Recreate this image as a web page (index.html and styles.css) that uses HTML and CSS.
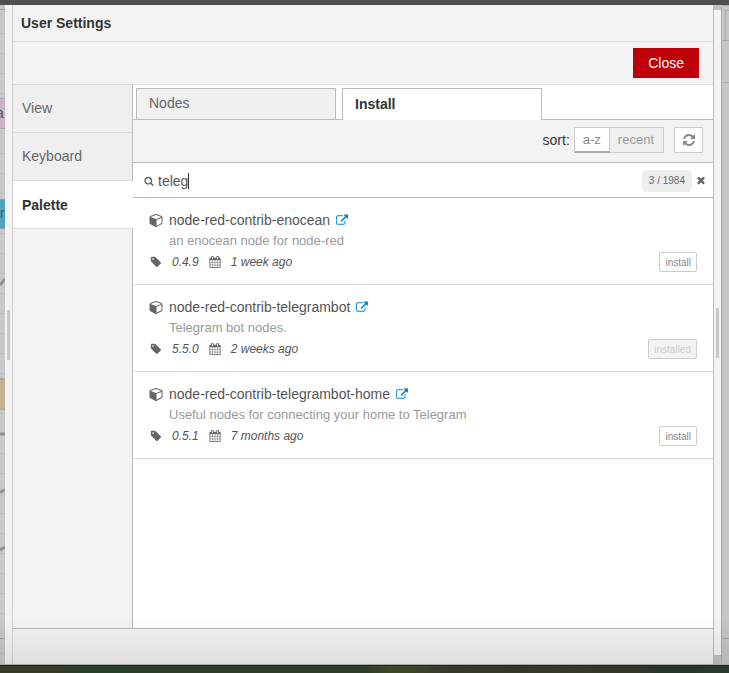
FILE: index.html
```html
<!DOCTYPE html>
<html lang="en">
<head>
<meta charset="utf-8">
<title>User Settings</title>
<link rel="stylesheet" href="styles.css">
</head>
<body>
<svg class="symbols" aria-hidden="true">
  <symbol id="search" viewBox="0 0 1792 1792"><path d="M1216 832q0-185-131.500-316.500t-316.500-131.500-316.500 131.500-131.500 316.500 131.500 316.500 316.500 131.500 316.500-131.500 131.500-316.500zm512 832q0 52-38 90t-90 38q-54 0-90-38l-343-342q-179 124-399 124-143 0-273.500-55.500t-225-150-150-225-55.500-273.500 55.500-273.500 150-225 225-150 273.500-55.500 273.500 55.500 225 150 150 225 55.500 273.500q0 220-124 399l343 343q37 37 37 90z"/></symbol>
  <symbol id="cube" viewBox="0 0 1664 1792"><path d="M896 1629l640-349v-636l-640 233v752zm-64-865l698-254-698-254-698 254zm832-252v768q0 35-18 65t-49 47l-704 384q-28 16-61 16t-61-16l-704-384q-31-17-49-47t-18-65v-768q0-40 23-73t61-47l704-256q22-8 44-8t44 8l704 256q38 14 61 47t23 73z"/></symbol>
  <symbol id="external" viewBox="0 0 1792 1792"><path d="M1408 992v320q0 119-84.500 203.500t-203.500 84.500h-832q-119 0-203.500-84.500t-84.500-203.500v-832q0-119 84.500-203.500t203.500-84.500h704q14 0 23 9t9 23v64q0 14-9 23t-23 9h-704q-66 0-113 47t-47 113v832q0 66 47 113t113 47h832q66 0 113-47t47-113v-320q0-14 9-23t23-9h64q14 0 23 9t9 23zm384-864v512q0 26-19 45t-45 19-45-19l-176-176-652 652q-10 10-23 10t-23-10l-114-114q-10-10-10-23t10-23l652-652-176-176q-19-19-19-45t19-45 45-19h512q26 0 45 19t19 45z"/></symbol>
  <symbol id="tag" viewBox="0 0 1792 1792"><path d="M576 448q0-53-37.500-90.500t-90.500-37.500-90.500 37.500-37.500 90.500 37.500 90.500 90.500 37.500 90.500-37.500 37.500-90.500zm1067 576q0 53-37 90l-491 492q-39 37-91 37-53 0-90-37l-715-716q-38-37-64.500-101t-26.500-117v-416q0-52 38-90t90-38h416q53 0 117 26.500t102 64.500l715 714q37 39 37 91z"/></symbol>
  <symbol id="calendar" viewBox="64 0 1664 1792"><path d="M192 1664h288v-288h-288v288zm352 0h320v-288h-320v288zm-352-352h288v-320h-288v320zm352 0h320v-320h-320v320zm-352-384h288v-288h-288v288zm736 736h320v-288h-320v288zm-384-736h320v-288h-320v288zm768 736h288v-288h-288v288zm-384-352h320v-320h-320v320zm-352-864v-288q0-13-9.500-22.500t-22.500-9.500h-64q-13 0-22.500 9.500t-9.500 22.500v288q0 13 9.500 22.500t22.500 9.500h64q13 0 22.500-9.500t9.500-22.500zm736 864h288v-320h-288v320zm-384-384h320v-288h-320v288zm384 0h288v-288h-288v288zm32-480v-288q0-13-9.500-22.500t-22.500-9.500h-64q-13 0-22.500 9.500t-9.500 22.500v288q0 13 9.500 22.500t22.500 9.500h64q13 0 22.500-9.500t9.500-22.500zm384-64v1280q0 52-38 90t-90 38h-1408q-52 0-90-38t-38-90v-1280q0-52 38-90t90-38h128v-96q0-66 47-113t113-47h64q66 0 113 47t47 113v96h384v-96q0-66 47-113t113-47h64q66 0 113 47t47 113v96h128q52 0 90 38t38 90z"/></symbol>
  <symbol id="refresh" viewBox="128 128 1536 1536"><path d="M1639 1056q0 5-1 7-64 268-268 434.500t-478 166.500q-146 0-282.500-55t-243.500-157l-129 129q-19 19-45 19t-45-19-19-45v-448q0-26 19-45t45-19h448q26 0 45 19t19 45-19 45l-137 137q71 66 161 102t187 36q134 0 250-65t186-179q11-17 53-117 8-23 30-23h192q13 0 22.500 9.500t9.500 22.500zm25-800v448q0 26-19 45t-45 19h-448q-26 0-45-19t-19-45 19-45l138-138q-148-137-349-137-134 0-250 65t-186 179q-11 17-53 117-8 23-30 23h-199q-13 0-22.500-9.500t-9.500-22.500v-7q65-268 270-434.500t480-166.500q146 0 284 55.500t245 156.500l130-129q19-19 45-19t45 19 19 45z"/></symbol>
  <symbol id="times" viewBox="300 400 1192 1260"><path d="M1490 1322q0 40-28 68l-136 136q-28 28-68 28t-68-28l-294-294-294 294q-28 28-68 28t-68-28l-136-136q-28-28-28-68t28-68l294-294-294-294q-28-28-28-68t28-68l136-136q28-28 68-28t68 28l294 294 294-294q28-28 68-28t68 28l136 136q28 28 28 68t-28 68l-294 294 294 294q28 28 28 68z"/></symbol>
</svg>
<div class="app">
  <div class="workspace" aria-hidden="true">
    <svg class="canvas" viewBox="0 0 5 659" preserveAspectRatio="xMinYMin slice">
      <defs><pattern id="grid" width="5" height="20" patternUnits="userSpaceOnUse" y="8"><path d="M0 .5h5" stroke="#bebebe"/></pattern></defs>
      <rect width="5" height="659" fill="#c8c8c8"/>
      <rect width="5" height="659" fill="url(#grid)"/>
      <path d="M0 4.500h5M0 633.500h5" stroke="#a5a5a5"/>
      <rect x="-5" y="93.500" width="12" height="30" fill="#c8b4c4" stroke="#aaa"/>
      <rect x="-5" y="194.500" width="12" height="29" fill="#4fa3be" stroke="#999"/>
      <text class="node-label" x="-4" y="113">a</text>
      <text class="node-label" x="0" y="213">r</text>
      <rect x="-5" y="374" width="12" height="30" fill="#cbb193" stroke="#aaa" stroke-width="2"/>
      <path d="M0 280l5-6M0 429h5M0 487l5-2M0 545l5-3" stroke="#929292" stroke-width="3"/>
    </svg>
  </div>
  <div class="separator left" role="separator" aria-orientation="vertical"><span class="grip"></span></div>
  <main class="tray">
    <h1 class="tray-title">User Settings</h1>
    <div class="tray-actions"><button class="close" type="button">Close</button></div>
    <div class="tray-body">
      <nav class="sections">
        <a href="#view">View</a>
        <a href="#keyboard">Keyboard</a>
        <a class="active" href="#palette" aria-current="page">Palette</a>
      </nav>
      <section class="palette">
        <div class="tabs">
          <a href="#nodes">Nodes</a>
          <a class="active" href="#install" aria-current="page">Install</a>
        </div>
        <div class="sort">
          <span class="sort-label">sort:</span>
          <div class="sort-group">
            <button class="selected" type="button" aria-pressed="true">a-z</button><button type="button" aria-pressed="false">recent</button>
          </div>
          <button class="refresh" type="button" aria-label="Refresh"><svg class="icon i12"><use href="#refresh"/></svg></button>
        </div>
        <div class="search">
          <label for="query" aria-label="Search modules"><svg class="icon i10"><use href="#search"/></svg></label>
          <input id="query" type="text" value="teleg"><span class="caret"></span>
          <span class="count">3 / 1984</span>
          <button class="clear" type="button" aria-label="Clear search"><svg class="icon i8"><use href="#times"/></svg></button>
        </div>
        <ul class="modules">
          <li>
            <div class="name"><svg class="icon i14"><use href="#cube"/></svg><span>node-red-contrib-enocean</span><a href="#enocean" aria-label="Open module page"><svg class="icon i12"><use href="#external"/></svg></a></div>
            <p>an enocean node for node-red</p>
            <div class="meta"><svg class="icon i12"><use href="#tag"/></svg><span class="version">0.4.9</span><svg class="icon i12"><use href="#calendar"/></svg><span>1 week ago</span><button type="button">install</button></div>
          </li>
          <li>
            <div class="name"><svg class="icon i14"><use href="#cube"/></svg><span>node-red-contrib-telegrambot</span><a href="#telegrambot" aria-label="Open module page"><svg class="icon i12"><use href="#external"/></svg></a></div>
            <p>Telegram bot nodes.</p>
            <div class="meta"><svg class="icon i12"><use href="#tag"/></svg><span class="version">5.5.0</span><svg class="icon i12"><use href="#calendar"/></svg><span>2 weeks ago</span><button type="button" disabled>installed</button></div>
          </li>
          <li>
            <div class="name"><svg class="icon i14"><use href="#cube"/></svg><span>node-red-contrib-telegrambot-home</span><a href="#telegrambot-home" aria-label="Open module page"><svg class="icon i12"><use href="#external"/></svg></a></div>
            <p>Useful nodes for connecting your home to Telegram</p>
            <div class="meta"><svg class="icon i12"><use href="#tag"/></svg><span class="version">0.5.1</span><svg class="icon i12"><use href="#calendar"/></svg><span>7 months ago</span><button type="button">install</button></div>
          </li>
        </ul>
      </section>
    </div>
    <footer class="tray-footer"></footer>
  </main>
  <div class="separator right" role="separator" aria-orientation="vertical"><span class="grip"></span></div>
  <div class="sidebar" aria-hidden="true"><div class="sidebar-tabs"><span></span></div><div class="sidebar-tools"></div><div class="sidebar-body"></div><div class="sidebar-footer"></div></div>
  <div class="shade"></div>
</div>
</body>
</html>
```
FILE: styles.css
```css
*, *::after { box-sizing: border-box; }
body {
  margin: 0;
  height: 100vh;
  display: flex;
  flex-direction: column;
  font: 14px/20px "Liberation Sans", Arial, sans-serif;
  color: #333;
  border-top: 5px solid #4f4f4f;
  background: #2a4029;
}
body::after {
  content: "";
  height: 8px;
  flex: none;
  border-top: 1px solid #1c241c;
  background: linear-gradient(90deg, #3a3b26, #3a3b26 7%, #26402a 12%, #2d3d29 22%, #2d3d29 50%, #3f4a26 54%, #34392a 62%, #373727 85%, #25352a 92%, #2a3c2b);
}
button, input { font: inherit; color: inherit; margin: 0; border-radius: 0; }
a { color: inherit; text-decoration: none; }
.symbols { position: absolute; width: 0; height: 0; }
.icon { display: block; flex: none; fill: currentColor; }
.i14 { width: 14px; height: 14px; }
.i12 { width: 12px; height: 12px; }
.i10 { width: 10px; height: 10px; }
.i8 { width: 8px; height: 8px; }

.app { position: relative; flex: 1; min-height: 0; display: flex; border-bottom: 1px solid #aaa; }
.workspace { width: 5px; overflow: hidden; background: #c8c8c8; }
.canvas { display: block; width: 5px; height: 659px; }
.node-label { font-size: 14px; fill: #555; }
.separator { width: 8px; display: flex; align-items: center; justify-content: center; background: #f3f3f3; }
.separator.left { border-right: 1px solid #d0d0d0; }
.separator.right { border-right: 1px solid #a8a8a8; border-top: 5px solid #c2c2c2; border-bottom: 9px solid #c2c2c2; }
.grip { width: 3px; height: 50px; background: #c8c8c8; }

.sidebar { width: 7px; display: flex; flex-direction: column; background: #c6c6c6; }
.sidebar-tabs { height: 36px; padding: 4px 0 0 3px; border-top: 1px solid #aaa; border-bottom: 1px solid #aaa; }
.sidebar-tabs span { display: block; height: 100%; border: 1px solid #aaa; border-width: 1px 0 0 1px; }
.sidebar-tools { height: 42px; border-bottom: 1px solid #b0b0b0; }
.sidebar-body { flex: 1; }
.sidebar-footer { height: 26px; border-top: 1px solid #aaa; }

.tray { flex: 1; min-width: 0; display: flex; flex-direction: column; background: #f3f3f3; border-right: 1px solid #bbb; }
.tray-title { margin: 0; padding: 8px; font-size: 14px; line-height: 20px; border-bottom: 1px solid #ddd; }
.tray-actions { display: flex; justify-content: flex-end; padding: 6px 14px; border-bottom: 1px solid #ddd; }
.close { height: 30px; padding: 0 15px; border: 0; background: #bd0009; color: #fff; }
.tray-body { flex: 1; min-height: 0; display: flex; border-bottom: 1px solid #bbb; }
.tray-footer { height: 35px; }

.sections { width: 120px; border-right: 1px solid #bbb; color: #666; }
.sections a { display: block; padding: 13px 9px 14px; margin: 0; border-bottom: 1px solid #ddd; background: #efefef; }
.sections .active { margin-right: -1px; background: #fff; color: #333; font-weight: bold; padding: 14px 9px 13px; }

.palette { flex: 1; min-width: 0; background: #fff; }
.tabs { display: flex; gap: 6px; height: 35px; padding: 3px 3px 0; border-bottom: 1px solid #bbb; }
.tabs a { width: 200px; padding: 4px 12px; border: 1px solid #bbb; border-bottom: 0; background: #f0f0f0; color: #666; }
.tabs .active { margin-bottom: -1px; padding-top: 5px; background: #fff; color: #333; font-weight: bold; }

.sort { display: flex; justify-content: flex-end; align-items: center; height: 43px; padding: 0 10px 2px; border-bottom: 1px solid #bbb; background: #f3f3f3; }
.sort-group { display: flex; margin: 0 10px 0 4px; border: 1px solid #ccc; }
.sort-group button { height: 24px; padding: 0 9px 0 8px; border: 0; background: #efefef; color: #999; font-size: 13px; }
.sort-group .selected { margin-bottom: -1px; padding: 0 8px; height: 25px; border-right: 1px solid #ccc; border-bottom: 2px solid #aaa; background: #fff; color: #888; }
.refresh { display: flex; align-items: center; justify-content: center; width: 29px; height: 26px; padding: 0; border: 1px solid #ccc; background: #fff; color: #888; }

.search { display: flex; align-items: center; height: 35px; padding: 2px 8px 0 11px; border-bottom: 1px solid #bbb; }
.search label { margin-right: 4px; color: #666; }
.search input { field-sizing: content; padding: 0; border: 0; outline: 0; background: none; color: #555; }
.caret { width: 1px; height: 16px; background: #333; }
.count { margin-left: auto; padding: 0 7px; border-radius: 4px; background: #eee; color: #666; font-size: 10px; line-height: 22px; }
.clear { margin-left: 5px; padding: 0; border: 0; background: none; color: #666; }

.modules { list-style: none; margin: 0; padding: 0; }
.modules li { padding: 12px 16px 11px; border-bottom: 1px solid #ddd; }
.name { display: flex; align-items: center; gap: 6px; margin-bottom: 1px; color: #555; }
.name .icon { color: #666; }
.name a .icon { color: #0088cc; }
.modules p { margin: 0 0 0 20px; color: #999; font-size: 13px; }
.meta { display: flex; align-items: center; height: 22px; padding-left: 1px; color: #555; font-size: 12px; font-style: italic; }
.meta .icon { color: #666; }
.meta span { margin-left: 10px; }
.meta .version { margin-right: 10px; }
.meta button { height: 20px; margin-left: auto; padding: 0 5px; border: 1px solid #ccc; border-radius: 2px; background: #fff; color: #888; font-size: 10px; font-style: normal; }
.meta button:disabled { background: #f3f3f3; color: #ccc; }

/* darkening toward the lower window edge */
.shade { position: absolute; inset: auto 0 0 0; height: 50px; background: linear-gradient(rgba(0,0,0,0), rgba(0,0,0,.08)); pointer-events: none; }
```
